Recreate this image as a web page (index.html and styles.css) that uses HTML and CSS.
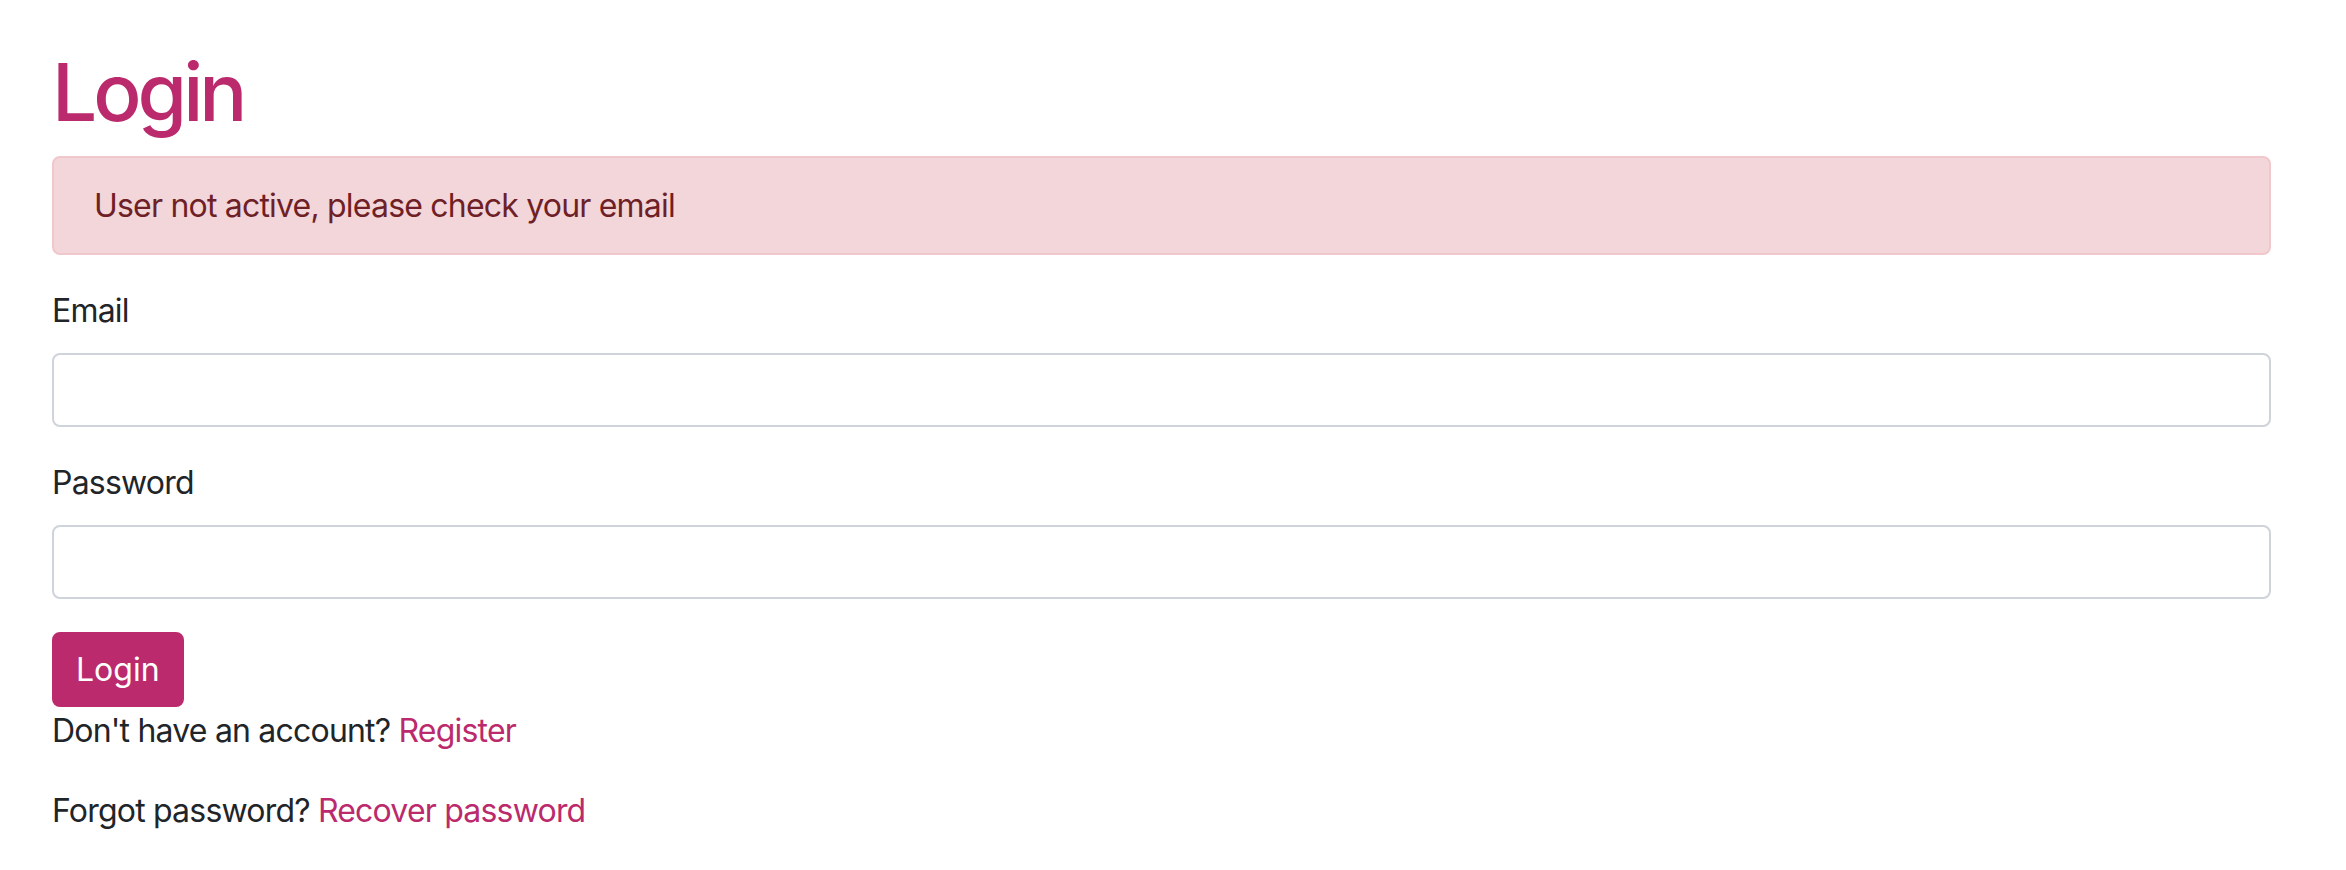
FILE: index.html
```html
<!DOCTYPE html>
<html lang="en">
<head>
    <meta charset="UTF-8">
    <meta name="viewport" content="width=device-width, initial-scale=1.0">
    <title>Login</title>
    <link rel="stylesheet" href="styles.css">
</head>
<body>
    <div class="container">
        <h1>Login</h1>
        <div class="alert alert-danger">User not active, please check your email</div>
        <form id="login-form">
            <div class="form-group">
                <label for="email">Email</label>
                <input type="email" id="email" name="email">
            </div>
            <div class="form-group">
                <label for="password">Password</label>
                <input type="password" id="password" name="password">
            </div>
            <button type="submit" class="btn">Login</button>
        </form>
        <p>Don't have an account? <a href="#">Register</a></p>
        <p>Forgot password? <a href="#">Recover password</a></p>
    </div>
</body>
</html>
```

FILE: styles.css
```css
* {
    box-sizing: border-box;
}

body {
    margin: 0;
    font-family: Inter, "Noto Sans", Arial, sans-serif;
    font-size: 32px;
    line-height: 48px;
    letter-spacing: -0.8px;
    color: #212529;
    background: #fff;
}

.container {
    padding: 44px 75px 0 52px;
}

h1 {
    font-size: 80px;
    font-weight: 500;
    line-height: 96px;
    color: #bb2a6c;
    margin: 0 0 16px;
    letter-spacing: -4px;
}

.alert {
    padding: 24px 40px 23px;
    border: 2px solid #f0c7cb;
    border-radius: 8px;
    margin-bottom: 32px;
}

.alert-danger {
    background: #f3d6d9;
    color: #6f1f26;
}

.form-group {
    margin-bottom: 32px;
}

label {
    display: block;
    margin-bottom: 18px;
}

input {
    display: block;
    width: 100%;
    height: 74px;
    padding: 12px 24px;
    font: inherit;
    color: #495057;
    background: #fff;
    border: 2px solid #ced4da;
    border-radius: 8px;
    outline: none;
}

.btn {
    display: block;
    margin-top: 33px;
    font: inherit;
    color: #fff;
    background: #bb2a6c;
    border: 2px solid #bb2a6c;
    border-radius: 8px;
    padding: 12px 22px 11px;
    cursor: pointer;
}

form .form-group:last-of-type {
    margin-bottom: 0;
}

p {
    margin: 0 0 32px;
}

a {
    color: #bb2a6c;
    text-decoration: none;
}
```
